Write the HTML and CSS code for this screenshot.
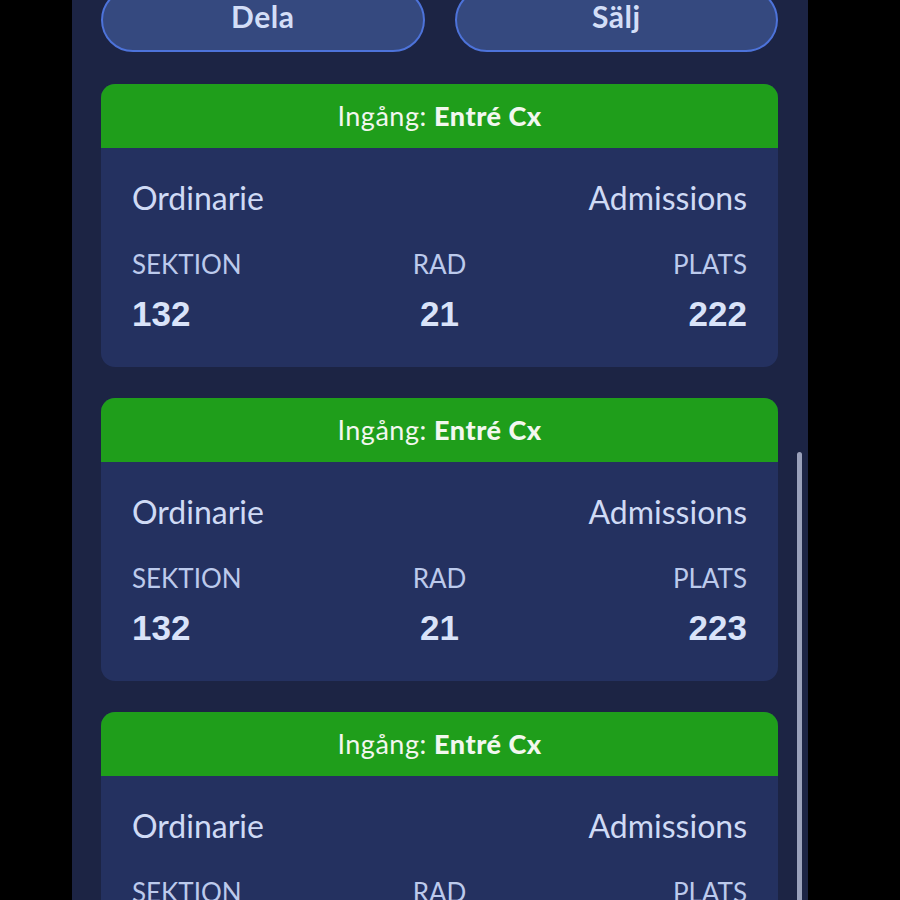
FILE: index.html
```html
<!DOCTYPE html>
<html lang="sv">
<head>
<meta charset="utf-8">
<link rel="stylesheet" href="styles.css">
</head>
<body>
<div class="panel">
  <div class="actions">
    <button class="btn">Dela</button>
    <button class="btn">Sälj</button>
  </div>
  <div class="tickets">
    <div class="card">
      <div class="card-head">Ingång: <b>Entré Cx</b></div>
      <div class="card-body">
        <div class="row-top"><span>Ordinarie</span><span>Admissions</span></div>
        <div class="seat">
          <div class="col left"><div class="lbl">SEKTION</div><div class="num">132</div></div>
          <div class="col mid"><div class="lbl">RAD</div><div class="num">21</div></div>
          <div class="col right"><div class="lbl">PLATS</div><div class="num">222</div></div>
        </div>
      </div>
    </div>
    <div class="card">
      <div class="card-head">Ingång: <b>Entré Cx</b></div>
      <div class="card-body">
        <div class="row-top"><span>Ordinarie</span><span>Admissions</span></div>
        <div class="seat">
          <div class="col left"><div class="lbl">SEKTION</div><div class="num">132</div></div>
          <div class="col mid"><div class="lbl">RAD</div><div class="num">21</div></div>
          <div class="col right"><div class="lbl">PLATS</div><div class="num">223</div></div>
        </div>
      </div>
    </div>
    <div class="card">
      <div class="card-head">Ingång: <b>Entré Cx</b></div>
      <div class="card-body">
        <div class="row-top"><span>Ordinarie</span><span>Admissions</span></div>
        <div class="seat">
          <div class="col left"><div class="lbl">SEKTION</div><div class="num">132</div></div>
          <div class="col mid"><div class="lbl">RAD</div><div class="num">21</div></div>
          <div class="col right"><div class="lbl">PLATS</div><div class="num">224</div></div>
        </div>
      </div>
    </div>
  </div>
  <div class="scrollbar"></div>
</div>
</body>
</html>
```

FILE: styles.css
```css
html, body {
  margin: 0;
  padding: 0;
  background: #000;
  height: 900px;
  overflow: hidden;
}
body {
  font-family: Lato, "Open Sans", sans-serif;
}
.panel {
  position: relative;
  margin-left: 72px;
  width: 736px;
  height: 900px;
  background: #1c2444;
  box-sizing: border-box;
  padding: 0 30px 0 29px;
  overflow: hidden;
}
.actions {
  display: flex;
  gap: 30px;
  margin-top: -12px;
}
.btn {
  flex: 1;
  box-sizing: border-box;
  height: 64px;
  border-radius: 32px;
  background: #35497f;
  border: 2px solid #4d73da;
  color: #d3def7;
  font-family: Lato, sans-serif;
  font-weight: 700;
  font-size: 30px;
  letter-spacing: 0.5px;
  padding: 0 0 8px 0;
  line-height: 30px;
}
.tickets {
  display: flex;
  flex-direction: column;
  gap: 31px;
  margin-top: 32px;
}
.card {
  border-radius: 14px;
  overflow: hidden;
  background: #243160;
}
.card-head {
  height: 64px;
  background: #1f9e1b;
  color: #f2f7ef;
  font-size: 27px;
  letter-spacing: 0.5px;
  line-height: 64px;
  text-align: center;
}
.card-head b {
  font-weight: 900;
}
.card-body {
  padding: 32px 31px 33px 31px;
  color: #cfdaf5;
}
.row-top {
  display: flex;
  justify-content: space-between;
  font-size: 32px;
  line-height: 36px;
}
.seat {
  display: grid;
  grid-template-columns: 1fr 1fr 1fr;
  margin-top: 33px;
}
.col.left { text-align: left; }
.col.mid { text-align: center; }
.col.right { text-align: right; }
.lbl {
  font-size: 26px;
  line-height: 30px;
  color: #bccaec;
}
.num {
  margin-top: 15px;
  font-family: "Liberation Sans", Arial, sans-serif;
  font-weight: 700;
  font-size: 35px;
  line-height: 40px;
  color: #d9e3f9;
}
.scrollbar {
  position: absolute;
  left: 725px;
  top: 452px;
  width: 5px;
  height: 460px;
  border-radius: 3px;
  background: #9aa1bb;
}
```
